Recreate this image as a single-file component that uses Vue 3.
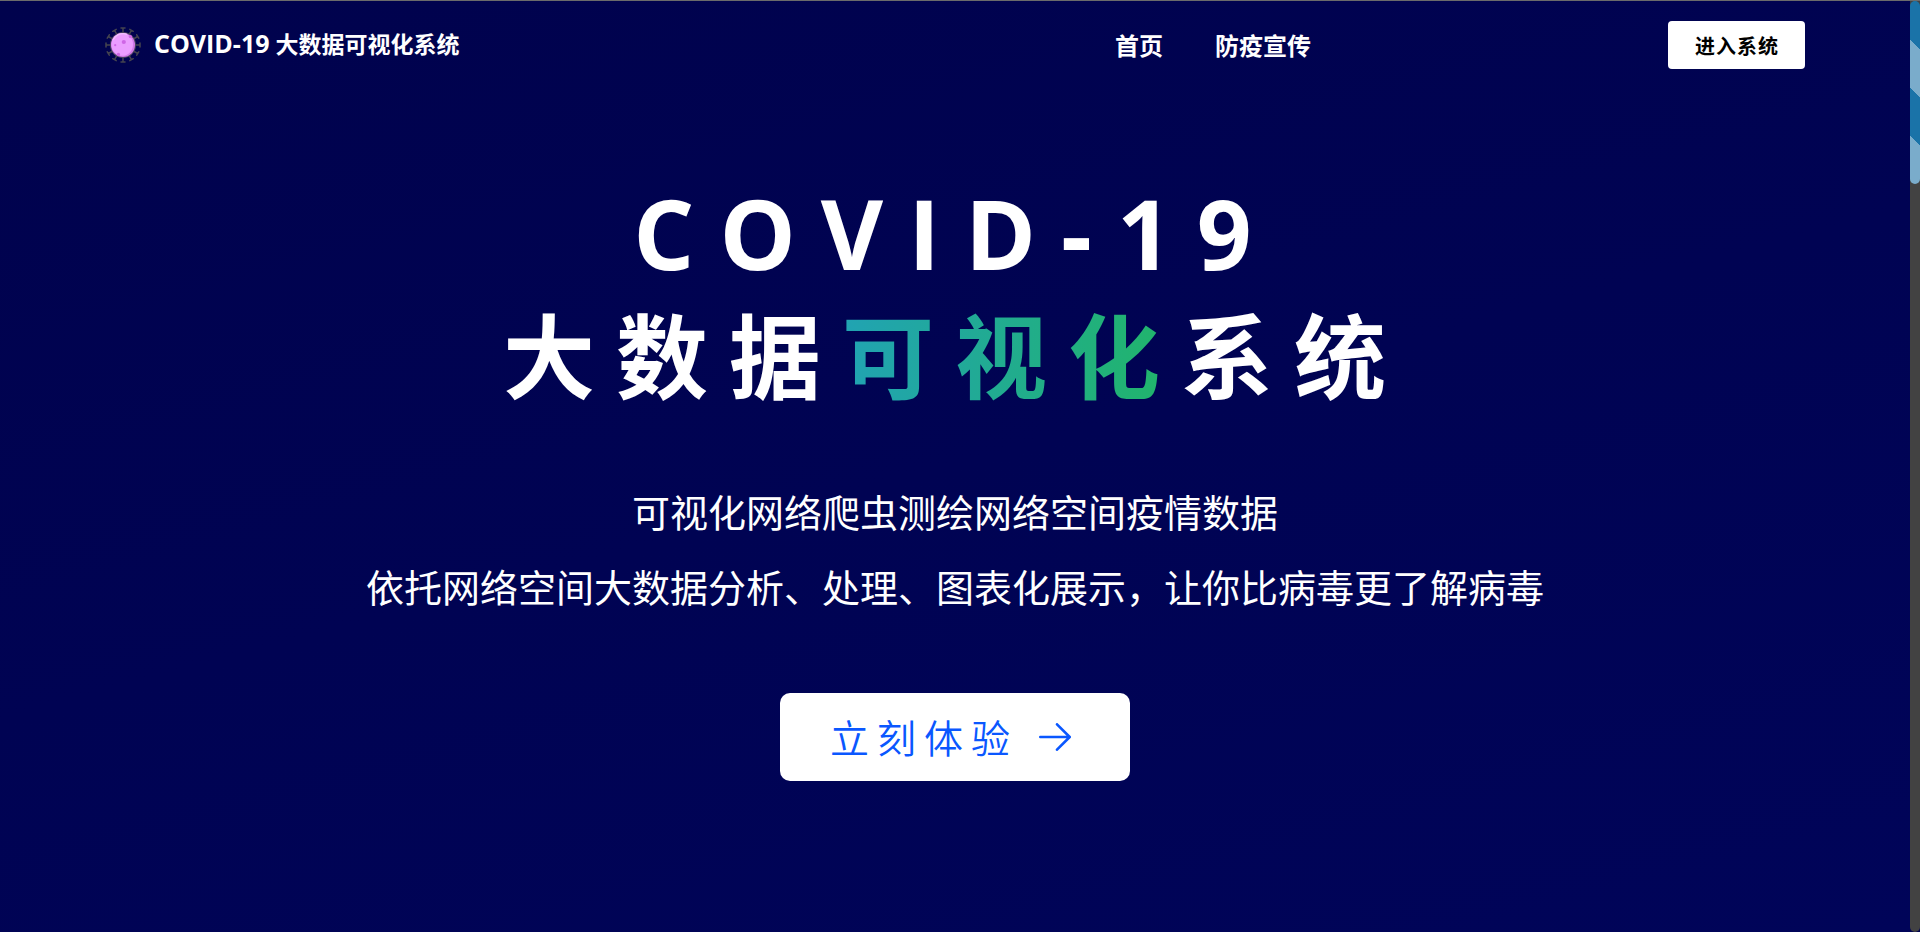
<script setup>
const links = [
  { text: '首页', href: '#home' },
  { text: '防疫宣传', href: '#guide' },
]
const spikes = Array.from({ length: 12 }, (_, i) => i * 30)
</script>

<template>
  <div class="page">
    <div class="content">
      <header class="bar">
        <a class="brand" href="#home">
          <svg class="virus" viewBox="0 0 36 36" aria-hidden="true">
            <g stroke="#44444f" stroke-width="1.5" stroke-linecap="round" fill="none">
              <path v-for="a in spikes" :key="a" d="M18 7V1M16 1h4" :transform="`rotate(${a} 18 18)`" />
            </g>
            <circle cx="18" cy="18" r="13" fill="#4a4660" />
            <circle cx="18" cy="18" r="12" fill="#d27ae8" />
            <ellipse cx="17.2" cy="17.4" rx="10.8" ry="11.4" fill="#eb9dff" />
            <path d="M8 13a11 11 0 0 1 14-5.6" stroke="#f2c0ff" stroke-width="1.2" fill="none" />
            <circle cx="18.8" cy="15" r="2.1" fill="#cf66e6" />
            <circle cx="10.2" cy="18.2" r="1.1" fill="#cf66e6" />
            <circle cx="13.4" cy="27.4" r="1.7" fill="#cf66e6" />
            <circle cx="25.4" cy="9.6" r="1.7" fill="#cf66e6" />
          </svg>
          <span class="name"><span class="code">COVID-19</span> 大数据可视化系统</span>
        </a>
        <nav class="nav">
          <a v-for="l in links" :key="l.text" :href="l.href">{{ l.text }}</a>
        </nav>
        <button class="enter" type="button">进入系统</button>
      </header>

      <main class="hero">
        <h1>
          <span class="latin">COVID-19</span>
          <span class="line">大数据<span class="accent">可视化</span>系统</span>
        </h1>
        <p class="lead">可视化网络爬虫测绘网络空间疫情数据<br />依托网络空间大数据分析、处理、图表化展示，让你比病毒更了解病毒</p>
        <button class="start" type="button">
          <span>立刻体验</span>
          <svg viewBox="0 0 32 28" aria-hidden="true">
            <path d="M1.3 14H30.5M18 1.3L30.7 14L18 26.7" />
          </svg>
        </button>
      </main>
    </div>
    <div class="track"><div class="thumb"></div></div>
  </div>
</template>

<style>
body {
  margin: 0;
  background: #000350;
}
</style>

<style scoped>
.page {
  display: flex;
  min-height: 100vh;
  box-sizing: border-box;
  border-top: 1px solid #6b6b6b;
  color: #fff;
  font-family: "Open Sans", "Noto Sans CJK SC", sans-serif;
}
.content {
  flex: 1;
  min-width: 0;
  background: linear-gradient(165deg, #00024d, #000459);
}
.bar {
  display: grid;
  grid-template-columns: 1fr auto 1fr;
  align-items: center;
  height: 88px;
  padding: 0 105px;
}
a {
  color: inherit;
  text-decoration: none;
  font-weight: 700;
}
.brand {
  display: flex;
  align-items: center;
  gap: 13px;
  font-size: 23px;
}
.name {
  padding-bottom: 4px;
}
.code {
  font-size: 25px;
}
.virus {
  width: 36px;
  height: 36px;
}
.nav {
  display: flex;
  gap: 52px;
  font-size: 24px;
  margin-left: 516px;
  padding-bottom: 2px;
}
.enter {
  justify-self: end;
  height: 48px;
  padding: 0 26px 0 27px;
  border: 0;
  border-radius: 4px;
  background: #fff;
  color: #000;
  font: 700 20px "Noto Sans CJK SC", sans-serif;
  letter-spacing: 1px;
}
.hero {
  display: flex;
  flex-direction: column;
  align-items: center;
  padding-top: 82px;
  text-align: center;
}
h1 {
  margin: 0;
  font-size: 92px;
  font-weight: 700;
  line-height: 124px;
  letter-spacing: 21px;
}
.latin {
  display: block;
  font-size: 96px;
  letter-spacing: 25px;
}
.line {
  display: block;
}
.accent {
  background: linear-gradient(to right, #21a3b3, #21b568);
  background-clip: text;
  -webkit-background-clip: text;
  color: transparent;
}
.lead {
  margin: 56px 0 0;
  font-size: 38px;
  line-height: 75px;
}
.start {
  display: flex;
  align-items: center;
  gap: 21px;
  height: 88px;
  margin-top: 68px;
  padding: 0 59px 0 50px;
  border: 0;
  border-radius: 10px;
  background: #fff;
  color: #0a57ff;
  font: 350 39px "Noto Sans CJK SC", sans-serif;
  letter-spacing: 8px;
}
.start span {
  padding-bottom: 2px;
}
.start svg {
  width: 32px;
  height: 28px;
  fill: none;
  stroke: #0a57ff;
  stroke-width: 2.6;
  stroke-linecap: round;
  stroke-linejoin: round;
}
.track {
  width: 10px;
  background: #424242;
  border-radius: 0 0 5px 5px;
}
.thumb {
  height: 183px;
  border-radius: 5px;
  background: linear-gradient(45deg, #7aaccb 25%, #1a73a8 25% 50%, #7aaccb 50% 75%, #1a73a8 75%);
}
</style>
